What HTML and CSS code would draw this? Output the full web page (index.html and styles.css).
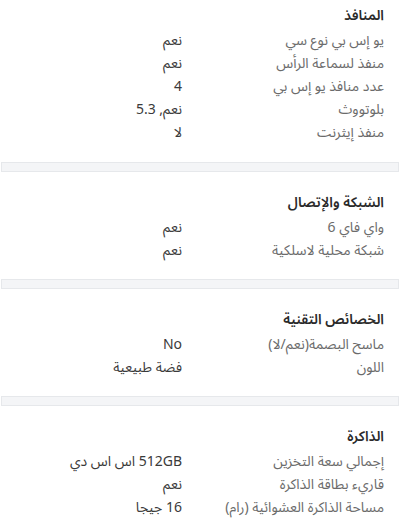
FILE: index.html
```html
<!DOCTYPE html>
<html lang="ar" dir="rtl">
<head>
<meta charset="utf-8">
<link rel="stylesheet" href="styles.css">
</head>
<body>
<div class="page">
  <section class="group first">
    <h2 class="title">المنافذ</h2>
    <div class="row"><span class="label">يو إس بي نوع سي</span><span class="value">نعم</span></div>
    <div class="row"><span class="label">منفذ لسماعة الرأس</span><span class="value">نعم</span></div>
    <div class="row"><span class="label">عدد منافذ يو إس بي</span><span class="value">4</span></div>
    <div class="row"><span class="label">بلوتووث</span><span class="value">نعم, 5.3</span></div>
    <div class="row"><span class="label">منفذ إيثرنت</span><span class="value">لا</span></div>
  </section>
  <div class="divider"></div>
  <section class="group">
    <h2 class="title">الشبكة والإتصال</h2>
    <div class="row"><span class="label">واي فاي 6</span><span class="value">نعم</span></div>
    <div class="row"><span class="label">شبكة محلية لاسلكية</span><span class="value">نعم</span></div>
  </section>
  <div class="divider"></div>
  <section class="group">
    <h2 class="title">الخصائص التقنية</h2>
    <div class="row"><span class="label">ماسح البصمة(نعم/لا)</span><span class="value">No</span></div>
    <div class="row"><span class="label">اللون</span><span class="value">فضة طبيعية</span></div>
  </section>
  <div class="divider"></div>
  <section class="group">
    <h2 class="title">الذاكرة</h2>
    <div class="row"><span class="label">إجمالي سعة التخزين</span><span class="value">512GB اس اس دي</span></div>
    <div class="row"><span class="label">قاريء بطاقة الذاكرة</span><span class="value">نعم</span></div>
    <div class="row"><span class="label">مساحة الذاكرة العشوائية (رام)</span><span class="value">16 جيجا</span></div>
  </section>
</div>
</body>
</html>
```

FILE: styles.css
```css
html, body {
  margin: 0;
  padding: 0;
  background: #ffffff;
}
body {
  font-family: "Noto Sans", "Noto Sans Arabic", "Noto Naskh Arabic", "DejaVu Sans", sans-serif;
  font-size: 14px;
  color: #333333;
}
.page {
  width: 400px;
}
.group {
  padding: 19px 16px 18px 16px;
}
.group.first {
  padding-top: 4px;
  padding-bottom: 19px;
}
.title {
  margin: 0 0 2px 0;
  font-size: 14px;
  font-weight: 600;
  color: #2a2a2a;
  line-height: 22px;
}
.row {
  display: grid;
  grid-template-columns: 202px 1fr;
  line-height: 23px;
}
.label {
  color: #6b6b6b;
}
.value {
  color: #3a3a3a;
}
.divider {
  height: 8px;
  margin: 0 1px;
  background: #f4f5f7;
  border: 1px solid #e6e8eb;
}
```
